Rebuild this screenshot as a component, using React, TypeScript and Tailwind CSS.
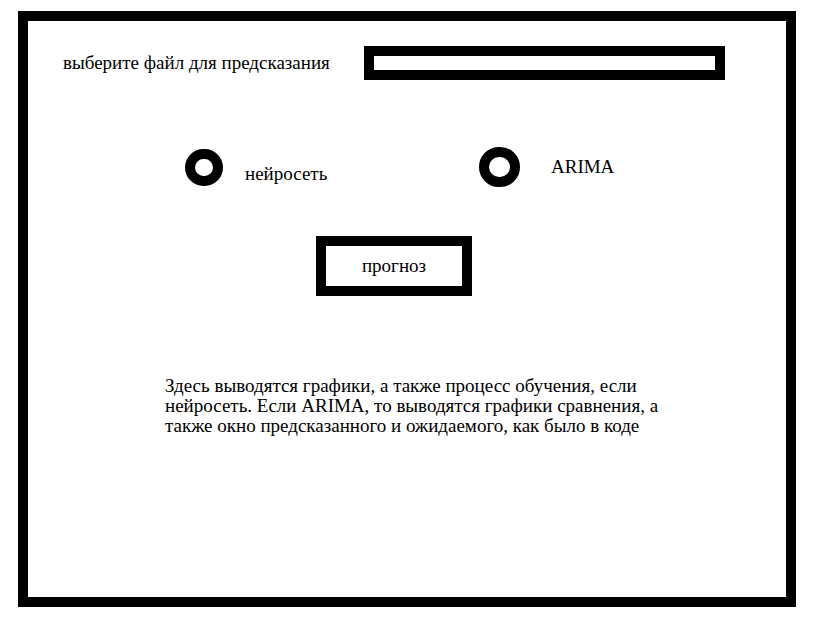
import { useState } from "react";

const radioClass =
  "shrink-0 appearance-none rounded-full border-10 border-black bg-white checked:bg-black";

export default function App() {
  const [file, setFile] = useState("");
  const [model, setModel] = useState("");

  return (
    <div className="min-h-screen bg-white pt-[11px] pr-[17px] pb-[13px] pl-[18px] font-['Liberation_Serif',serif] text-[19px] leading-5 text-black">
      <main className="min-h-[596px] border-10 border-black pt-[25px]">
        <form onSubmit={(event) => event.preventDefault()}>
          <div className="flex items-center pr-[61px] pl-[35px]">
            <label htmlFor="file" className="w-[301px] shrink-0">
              выберите файл для предсказания
            </label>
            <input
              id="file"
              type="text"
              value={file}
              onChange={(event) => setFile(event.target.value)}
              className="h-[34px] min-w-0 flex-1 border-10 border-black bg-white px-1 text-xs outline-none"
            />
          </div>

          <div className="mt-[67px] flex items-start pl-[157px]">
            <div className="flex w-[294px] items-start gap-[22px] pt-0.5">
              <input
                id="network"
                type="radio"
                name="model"
                checked={model === "network"}
                onChange={() => setModel("network")}
                className={`h-[37px] w-[38px] ${radioClass}`}
              />
              <label htmlFor="network" className="pt-[15px]">
                нейросеть
              </label>
            </div>
            <div className="flex items-center gap-[31px]">
              <input
                id="arima"
                type="radio"
                name="model"
                checked={model === "arima"}
                onChange={() => setModel("arima")}
                className={`h-[40px] w-[41px] ${radioClass}`}
              />
              <label htmlFor="arima">ARIMA</label>
            </div>
          </div>

          <button
            type="submit"
            className="mt-[49px] ml-[288px] block h-[60px] w-[156px] border-10 border-black bg-white"
          >
            прогноз
          </button>
        </form>

        <p className="mt-20 ml-[137px] max-w-[500px]">
          Здесь выводятся графики, а также процесс обучения, если нейросеть. Если
          ARIMA, то выводятся графики сравнения, а также окно предсказанного и
          ожидаемого, как было в коде
        </p>
      </main>
    </div>
  );
}
